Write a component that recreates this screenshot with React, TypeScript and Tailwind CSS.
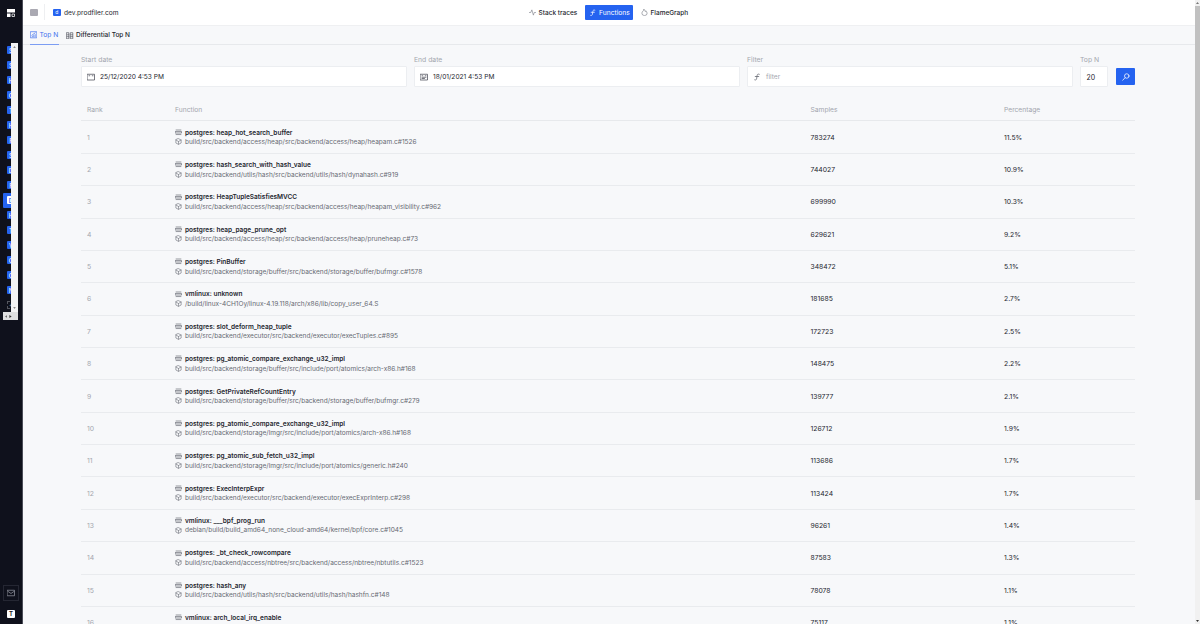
import React from "react";

type Row = [name: string, path: string, samples: string, percentage: string];

const rows: Row[] = [
  ["postgres: heap_hot_search_buffer", "build/src/backend/access/heap/src/backend/access/heap/heapam.c#1526", "783274", "11.5%"],
  ["postgres: hash_search_with_hash_value", "build/src/backend/utils/hash/src/backend/utils/hash/dynahash.c#919", "744027", "10.9%"],
  ["postgres: HeapTupleSatisfiesMVCC", "build/src/backend/access/heap/src/backend/access/heap/heapam_visibility.c#962", "699990", "10.3%"],
  ["postgres: heap_page_prune_opt", "build/src/backend/access/heap/src/backend/access/heap/pruneheap.c#73", "629621", "9.2%"],
  ["postgres: PinBuffer", "build/src/backend/storage/buffer/src/backend/storage/buffer/bufmgr.c#1578", "348472", "5.1%"],
  ["vmlinux: unknown", "/build/linux-4CH1Oy/linux-4.19.118/arch/x86/lib/copy_user_64.S", "181685", "2.7%"],
  ["postgres: slot_deform_heap_tuple", "build/src/backend/executor/src/backend/executor/execTuples.c#895", "172723", "2.5%"],
  ["postgres: pg_atomic_compare_exchange_u32_impl", "build/src/backend/storage/buffer/src/include/port/atomics/arch-x86.h#168", "148475", "2.2%"],
  ["postgres: GetPrivateRefCountEntry", "build/src/backend/storage/buffer/src/backend/storage/buffer/bufmgr.c#279", "139777", "2.1%"],
  ["postgres: pg_atomic_compare_exchange_u32_impl", "build/src/backend/storage/lmgr/src/include/port/atomics/arch-x86.h#168", "126712", "1.9%"],
  ["postgres: pg_atomic_sub_fetch_u32_impl", "build/src/backend/storage/lmgr/src/include/port/atomics/generic.h#240", "113686", "1.7%"],
  ["postgres: ExecInterpExpr", "build/src/backend/executor/src/backend/executor/execExprInterp.c#298", "113424", "1.7%"],
  ["vmlinux: ___bpf_prog_run", "debian/build/build_amd64_none_cloud-amd64/kernel/bpf/core.c#1045", "96261", "1.4%"],
  ["postgres: _bt_check_rowcompare", "build/src/backend/access/nbtree/src/backend/access/nbtree/nbtutils.c#1523", "87583", "1.3%"],
  ["postgres: hash_any", "build/src/backend/utils/hash/src/backend/utils/hash/hashfn.c#148", "78078", "1.1%"],
  ["vmlinux: arch_local_irq_enable", "arch/x86/include/asm/paravirt.h#783", "75117", "1.1%"],
];

const projects = ["S", "S", "H", "C", "T", "H", "F", "S", "D", "F", "D", "H", "T", "V", "C", "C", "N"];

function Icon({ className, children, width = 1.5 }: { className: string; children: React.ReactNode; width?: number }) {
  return (
    <svg viewBox="0 0 16 16" className={`shrink-0 ${className}`} fill="none" stroke="currentColor" strokeWidth={width} strokeLinecap="round" strokeLinejoin="round">
      {children}
    </svg>
  );
}

function FunctionIcon({ className }: { className: string }) {
  return (
    <Icon className={className} width={1.5}>
      <path d="M12.500 2.500c-2.600-1-3.900 0-4.200 2.300L7.200 11.500c-.3 2.200-1.600 3-3.700 2.200M4.500 7h7" />
    </Icon>
  );
}

function CalendarIcon({ filled }: { filled?: boolean }) {
  return (
    <Icon className="size-[8px] text-[#4b4e58]">
      <path d="M1 2.500h14v11.500H1zM4 5.500h1.500M10.500 5.500H12" />
      {filled && <path d="M4 8.500h8M4 11h5" />}
    </Icon>
  );
}

function Sidebar() {
  return (
    <aside className="relative flex w-[22.500px] shrink-0 flex-col bg-[#0f111c] border-r border-[#4b4d58]">
      <div className="flex h-[42.500px] shrink-0 pl-[7px] pt-[9px]">
        <svg viewBox="0 0 16 16" className="size-[8px] text-white" fill="currentColor">
          <path d="M0 0h16v7H0zM0 9h7v7H0z" />
          <path d="M10 10h5v5h-5z" fill="none" stroke="currentColor" strokeWidth="1.500" />
        </svg>
      </div>
      <div className="flex h-[269.500px] w-[18px] shrink-0">
        <div className="w-[11.300px] overflow-hidden">
          {projects.map((letter, i) => (
            <div key={i} className={i === 10 ? "flex h-[15px] w-[17px] items-center rounded-[1px] bg-[#2563f0] pl-[4px] ml-[3px]" : "flex h-[15px] w-[20px] items-center pl-[7px]"}>
              <span className={i === 10 ? "flex size-[8px] items-center justify-center rounded-[1px] bg-white text-[6px] font-medium text-[#2563f0]" : "flex size-[8px] shrink-0 items-center justify-center rounded-[1px] bg-[#2563f0] text-[6px] text-white"}>
                {letter}
              </span>
            </div>
          ))}
          <div className="flex h-[14px] w-[20px] items-center pl-[7px]">
            <span className="flex size-[8px] items-center justify-center border border-dashed border-[#54565f] text-[6px] leading-none text-[#aaa]">+</span>
          </div>
        </div>
        <div className="flex w-[6.700px] flex-col items-center justify-between bg-[#f3f3f4] py-[3px]">
          <svg viewBox="0 0 4 3" className="h-[2px] w-[3px]"><path d="M0 3L2 0l2 3z" fill="#888" /></svg>
          <svg viewBox="0 0 4 3" className="h-[2px] w-[3px]"><path d="M0 0l2 3 2-3z" fill="#888" /></svg>
        </div>
      </div>
      <div className="ml-[3px] flex h-[8px] w-[15px] shrink-0 items-center gap-[2px] bg-[#dedee0] pl-[2px]">
        <svg viewBox="0 0 3 4" className="h-[3px] w-[2px]"><path d="M3 0L0 2l3 2z" fill="#666" /></svg>
        <svg viewBox="0 0 3 4" className="h-[3px] w-[3px]"><path d="M0 0l3 2-3 2z" fill="#333" /></svg>
      </div>
      <div className="mt-auto flex flex-col pb-[6.500px]">
        <div className="ml-[3px] flex h-[16px] w-[16px] items-center justify-center border border-[#252733]">
          <Icon className="size-[8px] text-[#8f929c]">
            <path d="M1 2.500h14v11H1zM1.500 4.500L8 9l6.500-4.500" />
          </Icon>
        </div>
        <div className="ml-[7px] mt-[9px] flex size-[8px] items-center justify-center rounded-[1px] bg-white text-[6px] font-bold text-[#222]">T</div>
      </div>
    </aside>
  );
}

function Field({ label, className, children }: { label: string; className: string; children: React.ReactNode }) {
  return (
    <div className={`flex shrink-0 flex-col ${className}`}>
      <div className="h-[11px] whitespace-nowrap text-[6.800px] leading-[9px] text-[#a3a6ae]">{label}</div>
      <div className="flex h-[21px] items-center rounded-[1px] border border-[#eceef1] bg-white pt-px text-[6.600px] text-[#24262e]">{children}</div>
    </div>
  );
}

function TableRow({ row, rank }: { row: Row; rank: number }) {
  const [name, path, samples, percentage] = row;
  return (
    <div className="flex h-[32.360px] shrink-0 items-center border-b border-[#e9ebee] text-[6.800px] text-[#24262e]">
      <div className="w-[94px] pl-[6px] text-[#a3a6ae]">{rank}</div>
      <div className="w-[635.500px]">
        <div className="flex h-[9.500px] items-center">
          <Icon className="mr-[3px] size-[7px] text-[#565963]" width={1.4}>
            <path d="M2.500 2.300h11M2.500 12.700h11M1 5.800h14v3.400H1z" />
          </Icon>
          <span className="whitespace-nowrap pt-[1.500px] text-[6.500px] font-semibold text-[#24262e]">{name}</span>
        </div>
        <div className="flex h-[9.500px] items-center">
          <Icon className="mr-[3px] size-[7px] text-[#777a83]">
            <path d="M8 1.500l6 3v7l-6 3-6-3v-7zM2 4.500L8 8l6-3.500M8 8v6" />
          </Icon>
          <span className="whitespace-nowrap pt-[1.500px] text-[6.530px] text-[#666972]">{path}</span>
        </div>
      </div>
      <div className="w-[193.500px]">{samples}</div>
      <div>{percentage}</div>
    </div>
  );
}

export default function App() {
  return (
    <div className="flex h-[624px] w-[1200px] overflow-hidden bg-[#f7f8fa] font-['Inter',sans-serif] text-[6.600px] leading-[9px] text-[#24262e]">
      <Sidebar />
      <main className="flex min-w-0 flex-1 flex-col">
        <header className="flex h-[25.500px] shrink-0 items-center border-b border-[#eff0f2] bg-white">
          <div className="flex w-[506px] items-center">
            <span className="ml-[7.500px] size-[7.500px] rounded-[1px] bg-[#aaa9b2]" />
            <span className="ml-[6.500px] h-[16px] w-px bg-[#eeeff1]" />
            <span className="ml-[8px] flex size-[7.500px] items-center justify-center rounded-[1px] bg-[#2563f0] text-[5px] text-white">d</span>
            <span className="ml-[3.500px] pt-[1.500px]">dev.prodfiler.com</span>
          </div>
          <nav className="flex items-center whitespace-nowrap text-[6.500px] font-medium">
            <span className="flex w-[56.500px] items-center">
              <Icon className="mr-[3px] size-[7px] text-[#80838c]"><path d="M1 8h3l2.500-6L10 14l2-6h3" /></Icon>
              <span className="pt-[1.500px]">Stack traces</span>
            </span>
            <span className="flex h-[15px] w-[48px] items-center rounded-[1px] bg-[#2563f0] pl-[4px] text-[6.700px] font-normal text-white">
              <FunctionIcon className="mr-[2.500px] size-[7.500px]" />
              <span className="pt-[1.500px]">Functions</span>
            </span>
            <span className="ml-[7.500px] flex items-center">
              <Icon className="mr-[3px] size-[7px] text-[#80838c]"><path d="M7 1c0 3-5 4.500-5 8.500a6 5.500 0 0 0 12 0C14 7 12 5.500 11 4l-1 2C9 5 9 2.500 7 1z" /></Icon>
              <span className="pt-[1.500px]">FlameGraph</span>
            </span>
          </nav>
        </header>
        <div className="flex h-[19.200px] shrink-0 whitespace-nowrap border-b border-[#e7e9ec] pl-[7px] text-[6.500px] font-medium">
          <span className="flex h-[19px] w-[29px] items-center border-b border-[#7c9df3] text-[6.700px] font-normal text-[#3f70ee]">
            <Icon className="mr-[2.500px] mt-px size-[7.500px]"><path d="M1.500 1.500h13v13h-13zM4 9l7-5M5 12v-1M8 12V9.500M11 12V7.500" /></Icon>
            <span className="pt-[1.500px]">Top N</span>
          </span>
          <span className="ml-[7.500px] flex h-[19px] items-center">
            <Icon className="mr-[2.500px] mt-px size-[7.500px] text-[#565963]"><path d="M1.500 1.500h4.500v13H1.500zM10 1.500h4.500v13H10zM2 6h4M10 6h4M2 10h4M10 10h4" /></Icon>
            <span className="pt-[1.500px]">Differential Top N</span>
          </span>
        </div>
        <div className="flex min-h-0 flex-1 flex-col pl-[58.500px] pt-[10.500px]">
          <div className="flex h-[32px] shrink-0 gap-[7px]">
            <Field label="Start date" className="w-[326px]">
              <span className="ml-[5px] mr-[5px] flex"><CalendarIcon /></span>
              <span className="pt-[1.500px]">25/12/2020 4:53 PM</span>
            </Field>
            <Field label="End date" className="w-[326px]">
              <span className="ml-[5px] mr-[5px] flex"><CalendarIcon filled /></span>
              <span className="pt-[1.500px]">18/01/2021 4:53 PM</span>
            </Field>
            <Field label="Filter" className="w-[326px]">
              <FunctionIcon className="ml-[5px] mr-[5px] size-[8px] text-[#5e616b]" />
              <span className="pt-[1.500px] text-[#a3a6ae]">filter</span>
            </Field>
            <Field label="Top N" className="w-[28px]">
              <span className="ml-[5.500px] text-[7px]">20</span>
            </Field>
            <div className="ml-[1px] mt-[13px] flex h-[17px] w-[19px] items-center justify-center rounded-[1px] bg-[#2563f0] text-white">
              <Icon className="size-[8px]" width={1.5}><circle cx="9.500" cy="6" r="4.500" /><path d="M6 9.500l-4.500 5" /></Icon>
            </div>
          </div>
          <div className="flex w-[1054px] flex-col">
            <div className="flex h-[34.300px] shrink-0 items-center border-b border-[#e7e9ec] pt-[12.500px] text-[6.700px] text-[#a3a6ae]">
              <div className="w-[94px] pl-[6px]">Rank</div>
              <div className="w-[635.500px]">Function</div>
              <div className="w-[193.500px]">Samples</div>
              <div>Percentage</div>
            </div>
            {rows.map((row, i) => (
              <TableRow key={i} row={row} rank={i + 1} />
            ))}
          </div>
        </div>
      </main>
      <div className="flex w-[5px] shrink-0 flex-col bg-[#f1f1f1]">
        <svg viewBox="0 0 5 6" className="h-[6px] w-[5px] shrink-0"><path d="M1 4l1.500-2L4 4z" fill="#777" /></svg>
        <div className="h-[494px] shrink-0 bg-[#c1c1c1]" />
        <svg viewBox="0 0 5 6" className="mt-auto h-[6px] w-[5px]"><path d="M1 2l1.500 2L4 2z" fill="#333" /></svg>
      </div>
    </div>
  );
}
